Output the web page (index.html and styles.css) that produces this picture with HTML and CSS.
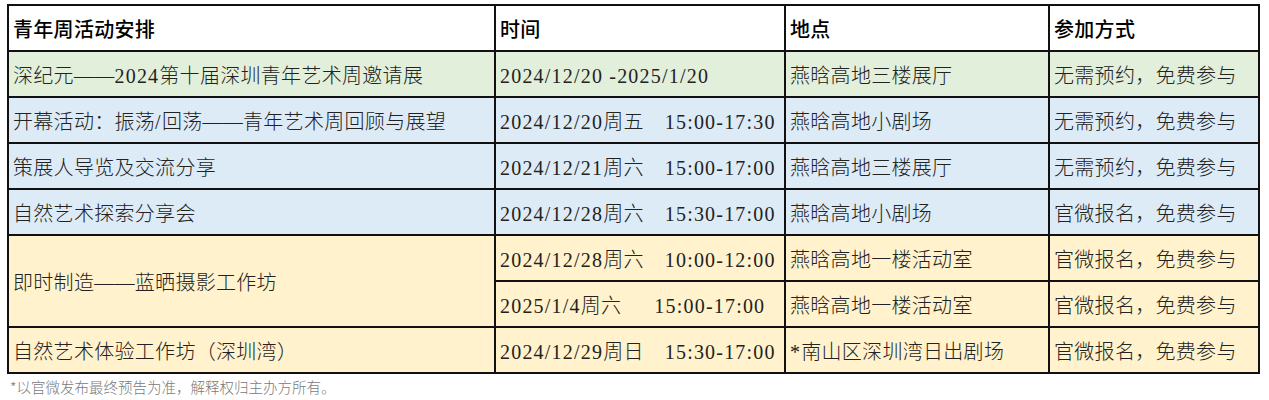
FILE: index.html
```html
<!DOCTYPE html>
<html lang="zh-CN">
<head>
<meta charset="utf-8">
<title>青年周活动安排</title>
<link rel="stylesheet" href="styles.css">
</head>
<body>
<table class="sched">
  <colgroup>
    <col class="c1"><col class="c2"><col class="c3"><col class="c4">
  </colgroup>
  <thead>
    <tr class="head">
      <th>青年周活动安排</th>
      <th>时间</th>
      <th>地点</th>
      <th>参加方式</th>
    </tr>
  </thead>
  <tbody>
    <tr class="green">
      <td>深纪元——<span class="n">2024</span>第十届深圳青年艺术周邀请展</td>
      <td><span class="n">2024/12/20 -2025/1/20</span></td>
      <td>燕晗高地三楼展厅</td>
      <td>无需预约，免费参与</td>
    </tr>
    <tr class="blue">
      <td>开幕活动：振荡<span class="n">/</span>回荡——青年艺术周回顾与展望</td>
      <td><span class="n">2024/12/20</span>周五<span class="n t">15:00-17:30</span></td>
      <td>燕晗高地小剧场</td>
      <td>无需预约，免费参与</td>
    </tr>
    <tr class="blue">
      <td>策展人导览及交流分享</td>
      <td><span class="n">2024/12/21</span>周六<span class="n t">15:00-17:00</span></td>
      <td>燕晗高地三楼展厅</td>
      <td>无需预约，免费参与</td>
    </tr>
    <tr class="blue">
      <td>自然艺术探索分享会</td>
      <td><span class="n">2024/12/28</span>周六<span class="n t">15:30-17:00</span></td>
      <td>燕晗高地小剧场</td>
      <td>官微报名，免费参与</td>
    </tr>
    <tr class="yellow">
      <td rowspan="2">即时制造——蓝晒摄影工作坊</td>
      <td><span class="n">2024/12/28</span>周六<span class="n t">10:00-12:00</span></td>
      <td>燕晗高地一楼活动室</td>
      <td>官微报名，免费参与</td>
    </tr>
    <tr class="yellow">
      <td><span class="n">2025/1/4</span>周六<span class="n t wide">15:00-17:00</span></td>
      <td>燕晗高地一楼活动室</td>
      <td>官微报名，免费参与</td>
    </tr>
    <tr class="yellow">
      <td>自然艺术体验工作坊（深圳湾）</td>
      <td><span class="n">2024/12/29</span>周日<span class="n t">15:30-17:00</span></td>
      <td><span class="n">*</span>南山区深圳湾日出剧场</td>
      <td>官微报名，免费参与</td>
    </tr>
  </tbody>
</table>
<p class="note">*以官微发布最终预告为准，解释权归主办方所有。</p>
</body>
</html>
```

FILE: styles.css
```css
html, body {
  margin: 0;
  padding: 0;
  background: #ffffff;
}
body {
  padding: 4px 0 0 7px;
  font-family: "Liberation Serif", "Noto Sans CJK SC", serif;
  color: #222222;
}
.sched {
  border-collapse: collapse;
  table-layout: fixed;
  width: 1251px;
}
.c1 { width: 487px; }
.c2 { width: 290px; }
.c3 { width: 264px; }
.c4 { width: 210px; }

.sched th,
.sched td {
  border: 2px solid #111111;
  height: 46px;
  padding: 4px 0 0 4px;
  box-sizing: border-box;
  text-align: left;
  vertical-align: middle;
  white-space: nowrap;
  overflow: hidden;
  font-size: 20px;
  line-height: 24px;
  font-weight: 300;
  letter-spacing: 0.3px;
}
.sched th {
  font-family: "Noto Sans CJK SC", sans-serif;
  font-weight: 500;
  color: #000000;
  padding-top: 2px;
}
.head { background: #ffffff; }
.green { background: #e2efda; }
.blue { background: #ddebf7; }
.yellow { background: #fff2cc; }

.n {
  font-family: "Liberation Serif", serif;
  letter-spacing: 1.2px;
}
.t { margin-left: 21px; }
.t.wide { margin-left: 33px; }

.note {
  margin: 4px 0 0 3px;
  font-family: "Noto Sans CJK SC", sans-serif;
  font-size: 14.5px;
  line-height: 18px;
  color: #7a7a7a;
  font-weight: 300;
}
```
